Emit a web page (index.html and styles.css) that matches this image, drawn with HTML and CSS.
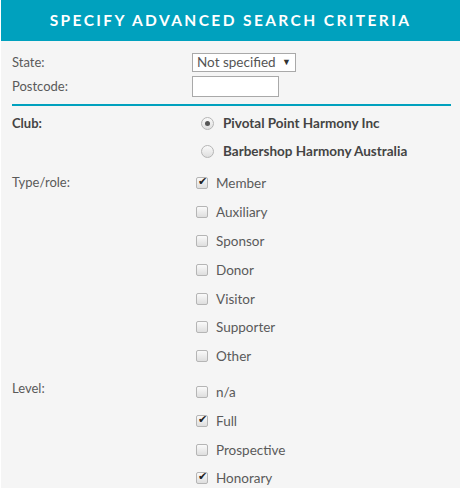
FILE: index.html
```html
<!DOCTYPE html>
<html lang="en">
<head>
    <meta charset="UTF-8">
    <meta name="viewport" content="width=device-width, initial-scale=1.0">
    <title>Advanced Search</title>
    <link rel="stylesheet" href="styles.css">
</head>
<body>
    <div class="panel">
        <h1 class="panel-title">Specify Advanced Search Criteria</h1>

        <div class="form-body">
            <div class="row">
                <label class="row-label" for="state">State:</label>
                <span class="select-wrap">
                    <select id="state">
                        <option>Not specified</option>
                        <option>ACT</option>
                        <option>NSW</option>
                        <option>QLD</option>
                        <option>VIC</option>
                    </select>
                </span>
            </div>
            <div class="row">
                <label class="row-label" for="postcode">Postcode:</label>
                <input type="text" id="postcode" class="postcode">
            </div>

            <hr class="divider">

            <div class="row group">
                <span class="row-label bold">Club:</span>
                <div class="options radios">
                    <label class="option"><input type="radio" name="club" checked> Pivotal Point Harmony Inc</label>
                    <label class="option"><input type="radio" name="club"> Barbershop Harmony Australia</label>
                </div>
            </div>

            <div class="row group">
                <span class="row-label">Type/role:</span>
                <div class="options checks">
                    <label class="option"><input type="checkbox" checked> Member</label>
                    <label class="option"><input type="checkbox"> Auxiliary</label>
                    <label class="option"><input type="checkbox"> Sponsor</label>
                    <label class="option"><input type="checkbox"> Donor</label>
                    <label class="option"><input type="checkbox"> Visitor</label>
                    <label class="option"><input type="checkbox"> Supporter</label>
                    <label class="option"><input type="checkbox"> Other</label>
                </div>
            </div>

            <div class="row group">
                <span class="row-label">Level:</span>
                <div class="options checks checks-level">
                    <label class="option"><input type="checkbox"> n/a</label>
                    <label class="option"><input type="checkbox" checked> Full</label>
                    <label class="option"><input type="checkbox"> Prospective</label>
                    <label class="option"><input type="checkbox" checked> Honorary</label>
                </div>
            </div>
        </div>
    </div>
</body>
</html>
```

FILE: styles.css
```css
body {
    margin: 0;
    padding: 0;
    background-color: #ffffff;
    font-family: Lato, "Open Sans", sans-serif;
    font-size: 13px;
    color: #5a5a5a;
}

.panel {
    margin-left: 1px;
    width: 459px;
    height: 488px;
    background-color: #f5f5f5;
    overflow: hidden;
}

.panel-title {
    margin: 0;
    height: 41px;
    line-height: 40px;
    background-color: #00a1be;
    color: #fff;
    text-align: center;
    text-transform: uppercase;
    font-size: 15.5px;
    font-weight: 700;
    letter-spacing: 2.4px;
}

.form-body {
    padding: 9px 9px 0 11px;
}

.row {
    display: grid;
    grid-template-columns: 180px 1fr;
    align-items: center;
    min-height: 24px;
}

.row-label {
    color: #5a5a5a;
}

.bold {
    font-weight: 700;
    color: #444;
}

.select-wrap {
    position: relative;
    width: 104px;
}

.select-wrap select {
    appearance: none;
    width: 104px;
    height: 19px;
    margin: 0;
    padding: 0 0 0 4px;
    border: 1px solid #a9a9a9;
    background-color: #fff;
    font-family: inherit;
    font-size: 13.5px;
    color: #555;
}

.select-wrap::after {
    content: "\25BC";
    position: absolute;
    right: 5px;
    top: 3px;
    font-size: 9px;
    color: #333;
    pointer-events: none;
}

.postcode {
    width: 87px;
    height: 21px;
    box-sizing: border-box;
    margin: 0;
    border: 1px solid #a9a9a9;
    background-color: #fff;
}

.divider {
    margin: 6px 0 0 0;
    border: none;
    height: 2px;
    background-color: #00a1be;
}

.group {
    align-items: start;
}

.group .row-label {
    padding-top: 9px;
}

.options {
    display: flex;
    flex-direction: column;
}

.option {
    display: flex;
    align-items: center;
    gap: 8px;
    height: 28.8px;
    font-size: 13.5px;
}

.radios {
    padding: 3px 0 0 9px;
}

.radios .option {
    height: 28px;
    font-weight: 700;
    color: #444;
    gap: 9px;
    font-size: 13.5px;
}

.checks {
    padding: 4px 0 0 4px;
}

.checks-level {
    padding-top: 7px;
}

.option input {
    appearance: none;
    margin: 0;
    width: 12px;
    height: 12px;
    border: 1px solid #b5b5b5;
    background: linear-gradient(#fafafa, #dedede);
    position: relative;
    flex: none;
}

.option input[type="checkbox"] {
    border-radius: 2px;
}

.option input[type="radio"] {
    width: 13px;
    height: 13px;
    border-radius: 50%;
}

.option input[type="checkbox"]:checked::after {
    content: "\2714";
    position: absolute;
    left: 1px;
    top: -3px;
    font-size: 11px;
    color: #222;
}

.option input[type="radio"]:checked::after {
    content: "";
    position: absolute;
    left: 3px;
    top: 3px;
    width: 5px;
    height: 5px;
    border-radius: 50%;
    background-color: #555;
}
```
